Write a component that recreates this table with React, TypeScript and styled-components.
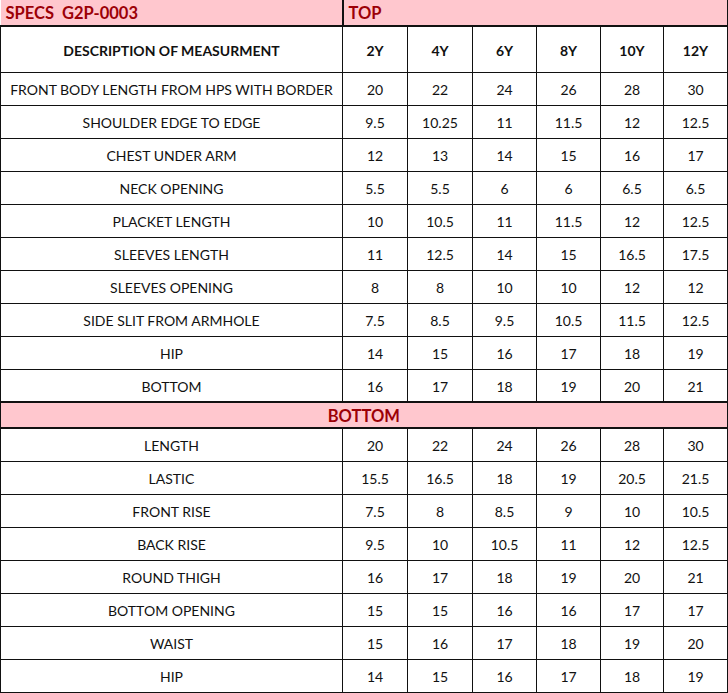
import styled, { createGlobalStyle } from "styled-components"

const GlobalStyle = createGlobalStyle`
    html, body {
        margin: 0;
        padding: 0;
        background: #ffffff;
    }
    body {
        font-family: Lato, "Open Sans", sans-serif;
        color: #111;
    }
`

const sizes = ["2Y", "4Y", "6Y", "8Y", "10Y", "12Y"]
const colWidths = [342, 65, 65, 64, 64, 63, 64]

const topRows: [string, string[]][] = [
    ["FRONT BODY LENGTH FROM HPS WITH BORDER", ["20", "22", "24", "26", "28", "30"]],
    ["SHOULDER EDGE TO EDGE", ["9.5", "10.25", "11", "11.5", "12", "12.5"]],
    ["CHEST UNDER ARM", ["12", "13", "14", "15", "16", "17"]],
    ["NECK OPENING", ["5.5", "5.5", "6", "6", "6.5", "6.5"]],
    ["PLACKET LENGTH", ["10", "10.5", "11", "11.5", "12", "12.5"]],
    ["SLEEVES LENGTH", ["11", "12.5", "14", "15", "16.5", "17.5"]],
    ["SLEEVES OPENING", ["8", "8", "10", "10", "12", "12"]],
    ["SIDE SLIT FROM ARMHOLE", ["7.5", "8.5", "9.5", "10.5", "11.5", "12.5"]],
    ["HIP", ["14", "15", "16", "17", "18", "19"]],
    ["BOTTOM", ["16", "17", "18", "19", "20", "21"]],
]

const bottomRows: [string, string[]][] = [
    ["LENGTH", ["20", "22", "24", "26", "28", "30"]],
    ["LASTIC", ["15.5", "16.5", "18", "19", "20.5", "21.5"]],
    ["FRONT RISE", ["7.5", "8", "8.5", "9", "10", "10.5"]],
    ["BACK RISE", ["9.5", "10", "10.5", "11", "12", "12.5"]],
    ["ROUND THIGH", ["16", "17", "18", "19", "20", "21"]],
    ["BOTTOM OPENING", ["15", "15", "16", "16", "17", "17"]],
    ["WAIST", ["15", "16", "17", "18", "19", "20"]],
    ["HIP", ["14", "15", "16", "17", "18", "19"]],
]

const Sheet = styled.table`
    width: 728px;
    border-collapse: collapse;
    table-layout: fixed;
    font-size: 14px;
`

const TitleRow = styled.tr`
    height: 26px;
    background: #ffc7ce;
    border-bottom: 2px solid #111;
`

const TitleCell = styled.td<{ divider?: boolean }>`
    padding: 1px 0 0 5px;
    color: #9c0006;
    font-weight: 700;
    font-size: 16.5px;
    text-align: left;
    white-space: pre;
    ${props => props.divider ? "border-left: 2px solid #111;" : ""}
    ${props => props.divider ? "border-right: 2px solid #111;" : ""}
`

const HeadRow = styled.tr`
    height: 46px;
`

const HeadCell = styled.th`
    border: 1px solid #111;
    font-weight: 700;
    font-size: 14px;
    padding: 2px 0 0;
    text-align: center;
`

const DataRow = styled.tr`
    height: 33px;
`

const Cell = styled.td`
    border: 1px solid #111;
    padding: 2px 0 0;
    text-align: center;
    white-space: nowrap;
`

const SectionRow = styled.tr`
    height: 26px;
    background: #ffc7ce;
`

const SectionCell = styled.td`
    border: 2px solid #111;
    border-left: 1px solid #111;
    color: #9c0006;
    font-weight: 700;
    font-size: 16.5px;
    text-align: center;
    padding: 1px 0 0;
`

const Rows = ({ rows }: { rows: [string, string[]][] }) => <>
    {rows.map(([label, values], i) =>
        <DataRow key={label + i}>
            <Cell>{label}</Cell>
            {values.map((v, j) => <Cell key={j}>{v}</Cell>)}
        </DataRow>
    )}
</>

const App = () => {
    return <>
        <GlobalStyle />
        <Sheet>
            <colgroup>
                {colWidths.map((w, i) => <col key={i} style={{ width: w }} />)}
            </colgroup>
            <tbody>
                <TitleRow>
                    <TitleCell>{"SPECS  G2P-0003"}</TitleCell>
                    <TitleCell colSpan={6} divider>TOP</TitleCell>
                </TitleRow>
                <HeadRow>
                    <HeadCell>DESCRIPTION OF MEASURMENT</HeadCell>
                    {sizes.map(s => <HeadCell key={s}>{s}</HeadCell>)}
                </HeadRow>
                <Rows rows={topRows} />
                <SectionRow>
                    <SectionCell colSpan={7}>BOTTOM</SectionCell>
                </SectionRow>
                <Rows rows={bottomRows} />
            </tbody>
        </Sheet>
    </>
}

export default App
